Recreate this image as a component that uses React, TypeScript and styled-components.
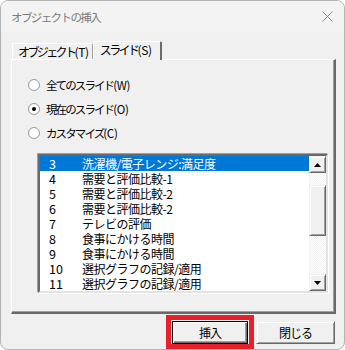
import React from 'react'
import styled, { createGlobalStyle } from 'styled-components'

const GlobalStyle = createGlobalStyle`
  html, body {
    margin: 0;
    padding: 0;
    background: #ffffff;
  }
  body {
    font-family: "Noto Sans CJK JP", "Noto Sans", sans-serif;
    color: #000;
  }
`

const Window = styled.div`
  width: 345px;
  height: 350px;
  box-sizing: border-box;
  border: 1px solid #b4b4b4;
  border-radius: 8px;
  background: #f0f0f0;
  overflow: hidden;
  display: flex;
  flex-direction: column;
`

const TitleBar = styled.div`
  height: 31px;
  flex: none;
  background: #f3f3f3;
  display: flex;
  align-items: center;
  justify-content: space-between;
  padding: 0 10px 0 10px;
`

const Title = styled.span`
  font-size: 11.5px;
  letter-spacing: -1.6px;
  color: #7b7b7b;
`

const CloseIcon = styled.svg`
  width: 11px;
  height: 11px;
  margin-right: 1px;
`

const Body = styled.div`
  flex: 1;
  display: flex;
  flex-direction: column;
  padding: 9px 9px 0 10px;
`

const TabStrip = styled.div`
  height: 18px;
  display: flex;
  align-items: flex-end;
  padding-left: 1px;
  position: relative;
  z-index: 1;
`

const Tab = styled.div<{ $active?: boolean }>`
  box-sizing: border-box;
  height: ${p => (p.$active ? 19 : 16)}px;
  margin-bottom: ${p => (p.$active ? -1 : 0)}px;
  padding: 0 ${p => (p.$active ? 8 : 3)}px 0 ${p => (p.$active ? 6 : 5)}px;
  background: #f0f0f0;
  border-top: 1px solid #ffffff;
  border-left: 1px solid #ffffff;
  border-right: ${p => (p.$active ? '2px solid #696969' : '1px solid #a0a0a0')};
  border-radius: 2px 2px 0 0;
  font-size: 12px;
  line-height: ${p => (p.$active ? 16 : 15)}px;
  white-space: nowrap;
`

/* narrow kana, as in the Windows UI font */
const Jp = styled.span<{ $squeeze: number }>`
  letter-spacing: ${p => -p.$squeeze}px;
`

const Key = styled.span`
  letter-spacing: -0.3px;
`

const Panel = styled.div`
  box-sizing: border-box;
  width: 325px;
  height: 255px;
  border-top: 1px solid #ffffff;
  border-left: 1px solid #ffffff;
  border-right: 2px solid #696969;
  border-bottom: 2px solid #696969;
  box-shadow: inset -1px -1px 0 #a0a0a0;
  display: flex;
  flex-direction: column;
  padding: 18px 0 0 16px;
`

const RadioGroup = styled.div`
  display: flex;
  flex-direction: column;
  gap: 10px;
`

const RadioRow = styled.label`
  display: flex;
  align-items: center;
  gap: 6px;
  height: 14px;
  font-size: 11.5px;
  white-space: nowrap;
`

const RadioCircle = styled.span<{ $checked?: boolean }>`
  box-sizing: border-box;
  width: 12px;
  height: 12px;
  border-radius: 50%;
  border: 1px solid #9a9a9a;
  background: radial-gradient(circle at 60% 60%, #ffffff 55%, #e6e6e6 100%);
  display: flex;
  align-items: center;
  justify-content: center;
  &::after {
    content: '';
    width: 4px;
    height: 4px;
    border-radius: 50%;
    background: ${p => (p.$checked ? '#000' : 'transparent')};
  }
`

const ListBox = styled.div`
  box-sizing: border-box;
  margin: 14px 0 0 10px;
  width: 290px;
  height: 139px;
  background: #ffffff;
  border-top: 2px solid #696969;
  border-left: 2px solid #696969;
  border-right: 2px solid #e3e3e3;
  border-bottom: 2px solid #e3e3e3;
  box-shadow: -1px -1px 0 #a0a0a0, 1px 1px 0 #ffffff;
  display: flex;
`

const Rows = styled.div`
  flex: 1;
  overflow: hidden;
  display: flex;
  flex-direction: column;
`

const Row = styled.div<{ $selected?: boolean }>`
  height: 15px;
  line-height: 15px;
  flex: none;
  display: flex;
  align-items: center;
  background: ${p => (p.$selected ? '#0078d7' : 'transparent')};
  color: ${p => (p.$selected ? '#ffffff' : '#000000')};
  font-size: 12px;
  white-space: nowrap;
`

const Num = styled.span`
  width: 33px;
  padding-left: 9px;
  flex: none;
  font-size: 12.5px;
`

const Label = styled.span`
  letter-spacing: -0.5px;
`

const ScrollBar = styled.div`
  width: 17px;
  flex: none;
  display: flex;
  flex-direction: column;
  background-color: #ffffff;
  background-image: repeating-conic-gradient(#f0f0f0 0 25%, #ffffff 0 50%);
  background-size: 2px 2px;
`

const ScrollButton = styled.div`
  box-sizing: border-box;
  height: 17px;
  flex: none;
  background: #f0f0f0;
  border-top: 1px solid #f0f0f0;
  border-left: 1px solid #f0f0f0;
  border-right: 1px solid #696969;
  border-bottom: 1px solid #696969;
  box-shadow: inset 1px 1px 0 #ffffff, inset -1px -1px 0 #a0a0a0;
  display: flex;
  align-items: center;
  justify-content: center;
`

const Track = styled.div`
  flex: 1;
  display: flex;
  flex-direction: column;
`

const Thumb = styled.div<{ $offset: number; $size: number }>`
  box-sizing: border-box;
  margin-top: ${p => p.$offset}px;
  height: ${p => p.$size}px;
  background: #f0f0f0;
  border-top: 1px solid #f0f0f0;
  border-left: 1px solid #f0f0f0;
  border-right: 1px solid #696969;
  border-bottom: 1px solid #696969;
  box-shadow: inset 1px 1px 0 #ffffff, inset -1px -1px 0 #a0a0a0;
`

const ButtonRow = styled.div`
  display: flex;
  justify-content: flex-end;
  align-items: flex-start;
  gap: 2px;
  padding-top: 1px;
`

const Highlight = styled.div`
  border: 5px solid #e8202a;
  padding: 1px 1px 0 1px;
  display: flex;
`

const Button = styled.div<{ $default?: boolean; $width: number }>`
  box-sizing: border-box;
  width: ${p => p.$width}px;
  height: 23px;
  margin-top: ${p => (p.$default ? 0 : 6)}px;
  background: #f0f0f0;
  border: ${p => (p.$default ? '1px solid #000' : '1px solid #f0f0f0')};
  box-shadow: ${p =>
    p.$default
      ? 'inset 1px 1px 0 #ffffff, inset -1px -1px 0 #696969, inset -2px -2px 0 #a0a0a0'
      : 'inset 1px 1px 0 #ffffff, inset -1px -1px 0 #a0a0a0'};
  border-right-color: ${p => (p.$default ? '#000' : '#696969')};
  border-bottom-color: ${p => (p.$default ? '#000' : '#696969')};
  display: flex;
  align-items: center;
  justify-content: center;
  font-size: 12px;
  line-height: 15px;
  letter-spacing: -1px;
`

const slides = [
  { n: 3, t: '洗濯機/電子レンジ:満足度' },
  { n: 4, t: '需要と評価比較-1' },
  { n: 5, t: '需要と評価比較-2' },
  { n: 6, t: '需要と評価比較-2' },
  { n: 7, t: 'テレビの評価' },
  { n: 8, t: '食事にかける時間' },
  { n: 9, t: '食事にかける時間' },
  { n: 10, t: '選択グラフの記録/適用' },
  { n: 11, t: '選択グラフの記録/適用' },
]

const Arrow = ({ up }: { up?: boolean }) => (
  <svg width="7" height="4" viewBox="0 0 7 4">
    <path d={up ? 'M3.5 0 L7 4 L0 4 Z' : 'M0 0 L7 0 L3.5 4 Z'} fill="#000" />
  </svg>
)

export default function App() {
  return (
    <>
      <GlobalStyle />
      <Window>
        <TitleBar>
          <Title>オブジェクトの挿入</Title>
          <CloseIcon viewBox="0 0 11 11">
            <path d="M0.5 0.5 L10.5 10.5 M10.5 0.5 L0.5 10.5" stroke="#8a8a8a" strokeWidth="1" />
          </CloseIcon>
        </TitleBar>
        <Body>
          <TabStrip>
            <Tab>
              <Jp $squeeze={2.6}>オブジェクト</Jp>
              <Key>(T)</Key>
            </Tab>
            <Tab $active>
              <Jp $squeeze={2.6}>スライド</Jp>
              <Key>(S)</Key>
            </Tab>
          </TabStrip>
          <Panel>
            <RadioGroup>
              <RadioRow>
                <RadioCircle />
                <span>
                  <Jp $squeeze={1.9}>全てのスライド</Jp>
                  <Key>(W)</Key>
                </span>
              </RadioRow>
              <RadioRow>
                <RadioCircle $checked />
                <span>
                  <Jp $squeeze={1.9}>現在のスライド</Jp>
                  <Key>(O)</Key>
                </span>
              </RadioRow>
              <RadioRow>
                <RadioCircle />
                <span>
                  <Jp $squeeze={1.9}>カスタマイズ</Jp>
                  <Key>(C)</Key>
                </span>
              </RadioRow>
            </RadioGroup>
            <ListBox>
              <Rows>
                {slides.map((s, i) => (
                  <Row key={i} $selected={i === 0}>
                    <Num>{s.n}</Num>
                    <Label>{s.t}</Label>
                  </Row>
                ))}
              </Rows>
              <ScrollBar>
                <ScrollButton>
                  <Arrow up />
                </ScrollButton>
                <Track>
                  <Thumb $offset={12} $size={51} />
                </Track>
                <ScrollButton>
                  <Arrow />
                </ScrollButton>
              </ScrollBar>
            </ListBox>
          </Panel>
          <ButtonRow>
            <Highlight>
              <Button $default $width={76}>挿入</Button>
            </Highlight>
            <Button $width={79}>閉じる</Button>
          </ButtonRow>
        </Body>
      </Window>
    </>
  )
}
